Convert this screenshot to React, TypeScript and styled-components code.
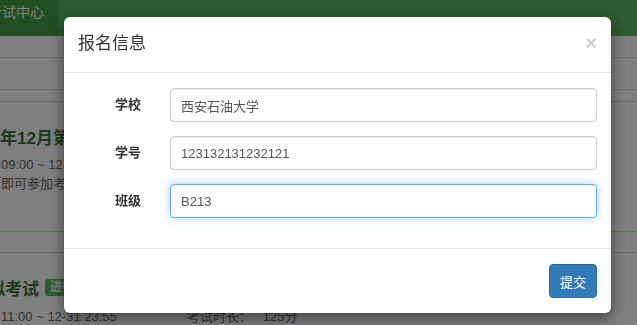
import styled, { createGlobalStyle } from "styled-components";
import { Fragment } from "react";

const GlobalStyle = createGlobalStyle`
    html, body {
        margin: 0;
        padding: 0;
        background: #ffffff;
        overflow: hidden;
    }
    body {
        font-family: "Liberation Sans", "Noto Sans CJK SC", sans-serif;
        font-size: 13px;
        color: #333333;
    }
    * {
        box-sizing: border-box;
    }
`;

const Page = styled.div`
    width: 637px;
    height: 325px;
    overflow: hidden;
    background: #ffffff;
`;

const Navbar = styled.div`
    display: flex;
    height: 36px;
    background: #5cb85c;
`;

const NavItem = styled.div<{ $active?: boolean }>`
    display: flex;
    justify-content: flex-end;
    width: 58px;
    padding: 3px 14px 0 0;
    line-height: 18px;
    font-size: 14px;
    color: #ffffff;
    white-space: nowrap;
    overflow: hidden;
    background: ${(p) => (p.$active ? "#449d44" : "transparent")};
`;

const Crumb = styled.div`
    height: 33px;
    margin: 21px 0 11px;
    border-top: 1px solid #dddddd;
    border-bottom: 1px solid #dddddd;
`;

const Panel = styled.div<{ $height: number }>`
    height: ${(p) => p.$height}px;
    padding-top: 24px;
    border-top: 1px solid #c9e2b3;
    border-bottom: 1px solid #c9e2b3;
`;

const PanelGap = styled.div`
    height: 20px;
`;

const ExamTitle = styled.div<{ $indent?: number }>`
    display: flex;
    align-items: center;
    height: 20px;
    margin-left: ${(p) => p.$indent ?? 0}px;
    font-size: 17px;
    font-weight: bold;
    color: #3c763d;
    white-space: nowrap;
`;

const Badge = styled.span`
    margin-left: 6px;
    padding: 1px 5px;
    border-radius: 3px;
    background: #5cb85c;
    color: #ffffff;
    font-size: 12px;
    line-height: 15px;
    font-weight: bold;
`;

const MetaRow = styled.div<{ $top: number }>`
    display: grid;
    grid-template-columns: 186px auto;
    margin-top: ${(p) => p.$top}px;
    padding-left: 1px;
    line-height: 18px;
    font-size: 13px;
    color: #666666;
    white-space: nowrap;
`;

const Backdrop = styled.div`
    position: fixed;
    inset: 0;
    background: rgba(0, 0, 0, 0.5);
`;

const Modal = styled.div`
    width: 547px;
    margin: 17px 0 0 64px;
    background: #ffffff;
    border-radius: 6px;
    box-shadow: 0 5px 15px rgba(0, 0, 0, 0.5);
`;

const ModalHeader = styled.div`
    display: flex;
    align-items: center;
    justify-content: space-between;
    height: 56px;
    padding: 0 14px 0 14px;
    border-bottom: 1px solid #e5e5e5;
`;

const ModalTitle = styled.h4`
    margin: 0 0 3px;
    font-size: 17px;
    font-weight: normal;
    line-height: 25px;
    color: #333333;
`;

const Close = styled.button`
    padding: 0;
    margin: 0 0 3px;
    border: none;
    background: none;
    font-family: "Liberation Sans", sans-serif;
    font-size: 20px;
    font-weight: bold;
    line-height: 1;
    color: #000000;
    opacity: 0.2;
    cursor: pointer;
`;

const ModalBody = styled.div`
    display: grid;
    grid-template-columns: 62px 1fr;
    column-gap: 29px;
    row-gap: 14px;
    padding: 15px 14px 30px 15px;
`;

const Label = styled.label`
    padding-top: 7px;
    line-height: 20px;
    text-align: right;
    font-size: 13px;
    font-weight: bold;
    color: #333333;
`;

const Input = styled.input<{ $focus?: boolean }>`
    width: 100%;
    height: 34px;
    padding: 6px 10px;
    font-family: "Liberation Sans", "Noto Sans CJK SC", sans-serif;
    font-size: 13px;
    color: #555555;
    background: #ffffff;
    border: 1px solid ${(p) => (p.$focus ? "#66afe9" : "#cccccc")};
    border-radius: 4px;
    outline: none;
    box-shadow: ${(p) =>
        p.$focus
            ? "inset 0 1px 1px rgba(0,0,0,.075), 0 0 8px rgba(102,175,233,.6)"
            : "inset 0 1px 1px rgba(0,0,0,.075)"};
`;

const ModalFooter = styled.div`
    display: flex;
    justify-content: flex-end;
    padding: 15px 14px 15px 15px;
    border-top: 1px solid #e5e5e5;
`;

const PrimaryButton = styled.button`
    height: 34px;
    padding: 0 10px;
    font-family: "Liberation Sans", "Noto Sans CJK SC", sans-serif;
    font-size: 13px;
    color: #ffffff;
    background: #337ab7;
    border: 1px solid #2e6da4;
    border-radius: 4px;
    cursor: pointer;
`;

const fields = [
    { label: "学校", value: "西安石油大学" },
    { label: "学号", value: "123132131232121" },
    { label: "班级", value: "B213", focus: true },
];

export default function App() {
    return (
        <>
            <GlobalStyle />
            <Page>
                <Navbar>
                    <NavItem $active>考试中心</NavItem>
                </Navbar>
                <Crumb />
                <Panel $height={131}>
                    <ExamTitle>年12月第二次模拟考试</ExamTitle>
                    <MetaRow $top={10}>
                        <span>09:00 ~ 12-31 23:55</span>
                    </MetaRow>
                    <MetaRow $top={1}>
                        <span>即可参加考试</span>
                    </MetaRow>
                </Panel>
                <PanelGap />
                <Panel $height={120}>
                    <ExamTitle $indent={-12}>
                        拟考试<Badge>进行中</Badge>
                    </ExamTitle>
                    <MetaRow $top={11}>
                        <span>11:00 ~ 12-31 23:55</span>
                        <span>考试时长：&nbsp;&nbsp;&nbsp;125分</span>
                    </MetaRow>
                </Panel>
            </Page>

            <Backdrop>
                <Modal>
                    <ModalHeader>
                        <ModalTitle>报名信息</ModalTitle>
                        <Close>×</Close>
                    </ModalHeader>
                    <ModalBody>
                        {fields.map((f) => (
                            <Fragment key={f.label}>
                                <Label>{f.label}</Label>
                                <Input defaultValue={f.value} $focus={f.focus} />
                            </Fragment>
                        ))}
                    </ModalBody>
                    <ModalFooter>
                        <PrimaryButton>提交</PrimaryButton>
                    </ModalFooter>
                </Modal>
            </Backdrop>
        </>
    );
}
